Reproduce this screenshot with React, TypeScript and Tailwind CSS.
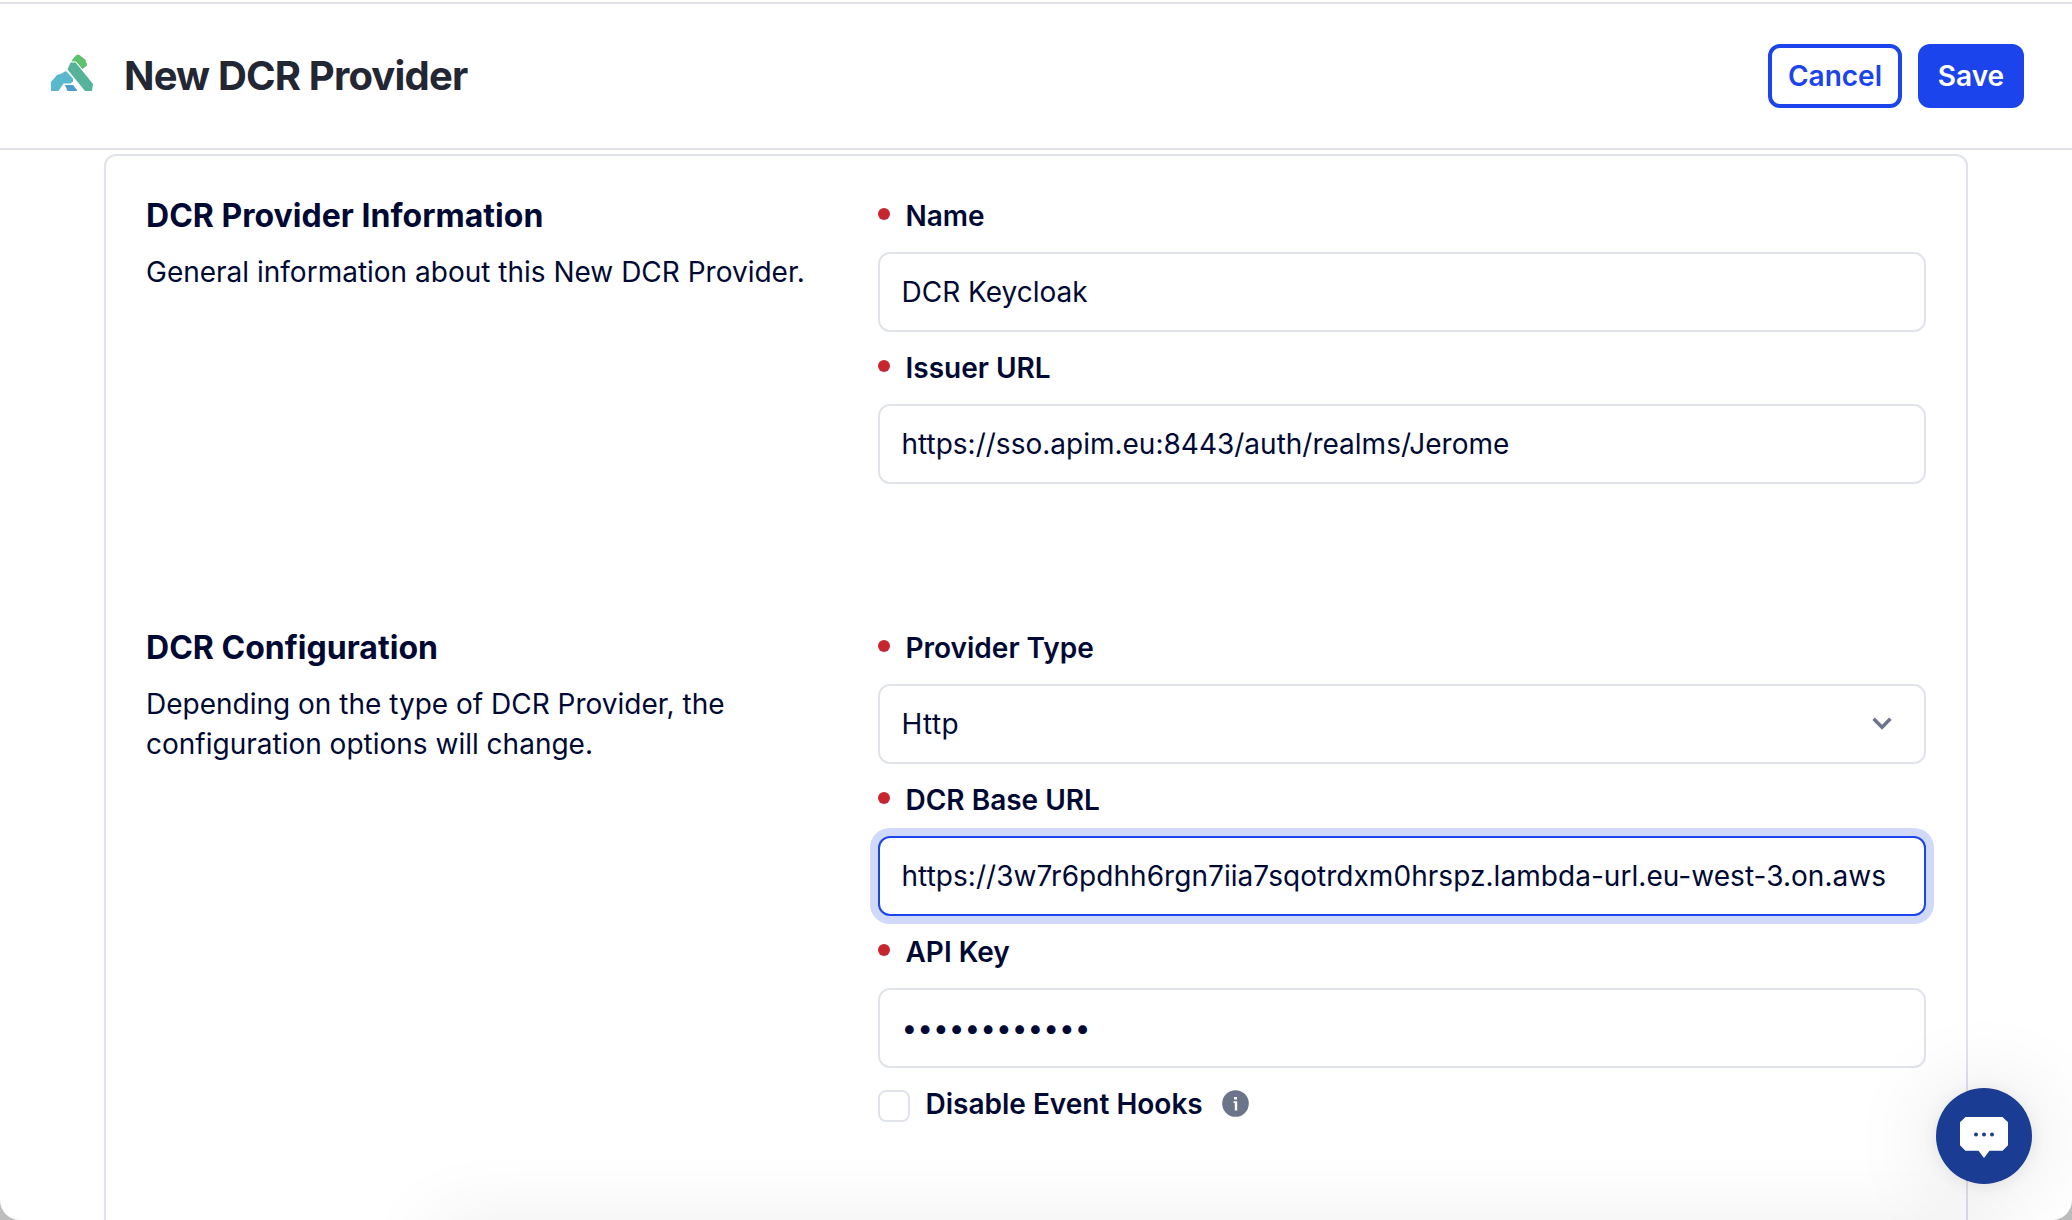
import React from "react";

function KongLogo() {
  return (
    <svg width="42" height="37" viewBox="0 0 42 37" className="-mt-[7px] block">
      <path fill="#5dc16d" d="M26 0.5 L28.5 1 L35 6.2 L34.7 8 L36 9.5 L36 11.5 L31.5 15 L25 7.6 L20.5 7.2 L22 4.8 Z" />
      <path fill="#55b39a" d="M19.5 8.4 L24.6 8.6 L42 30 L41 37 L34 37 L16.5 15.5 Z" />
      <path fill="#57b9cb" d="M15 17 L22 24.5 L22 27.5 L19.5 29.5 L12.5 29.5 L7.5 37 L0 37 L0 28 L6 21 L10.5 19.5 Z" />
      <path fill="#4c9bcd" d="M14 31 L22 31 L26 36 L26 37 L16.5 37 Z" />
    </svg>
  );
}

function Field({
  label,
  className = "border-[#e0e4ea]",
  children,
}: {
  label: string;
  className?: string;
  children: React.ReactNode;
}) {
  return (
    <div>
      <div className="flex h-[56px] items-start gap-[15.5px] leading-10">
        <span className="mt-[12px] size-3 rounded-full bg-[#c6262e]" />
        <span className="font-semibold">{label}</span>
      </div>
      <div className={"flex h-20 items-center justify-between rounded-xl border-2 bg-white pr-[22px] pl-[21.5px] " + className}>
        {children}
      </div>
    </div>
  );
}

function Section({ title, text, children }: { title: string; text: string; children: React.ReactNode }) {
  return (
    <section className="flex">
      <div className="w-[732px] shrink-0">
        <h2 className="text-[32px] leading-10 font-bold tracking-[0.03px]">{title}</h2>
        <p className="mt-4 w-[670px] leading-10">{text}</p>
      </div>
      <div className="flex w-[1048px] flex-col gap-4">{children}</div>
    </section>
  );
}

export default function App() {
  return (
    <div className="relative h-[1220px] w-[2072px] overflow-hidden bg-[#bdbdbd] font-['Inter',sans-serif] text-[28px] text-[#000933]">
      <div className="h-full overflow-hidden rounded-b-[20px] bg-white pt-[2px]">
        <header className="flex h-[148px] items-center justify-between border-y-2 border-[#e0e2e8] pr-12 pl-[51px]">
          <div className="flex items-center">
            <KongLogo />
            <h1 className="ml-[31px] text-[40px] leading-none font-bold tracking-[-0.83px] text-[#232633]">New DCR Provider</h1>
          </div>
          <div className="flex gap-4 font-semibold">
            <button className="h-16 w-[134px] rounded-xl border-4 border-[#1b44ec] text-[#1b44ec]">Cancel</button>
            <button className="h-16 w-[106px] rounded-xl bg-[#1b44ec] text-white">Save</button>
          </div>
        </header>
        <main className="mt-1 ml-[104px] flex h-[1100px] w-[1864px] flex-col gap-[144px] rounded-t-xl border-2 border-[#e0e4ea] px-10 pt-10">
          <Section title="DCR Provider Information" text="General information about this New DCR Provider.">
            <Field label="Name">DCR Keycloak</Field>
            <Field label="Issuer URL">https://sso.apim.eu:8443/auth/realms/Jerome</Field>
          </Section>
          <Section title="DCR Configuration" text="Depending on the type of DCR Provider, the configuration options will change.">
            <Field label="Provider Type">
              <span className="tracking-[0.4px]">Http</span>
              <svg width="20" height="14" viewBox="0 0 20 14" className="mr-[10px]" fill="none" stroke="#6c7489" strokeWidth="3.4">
                <path d="M1.6 1.7 L10 10.3 L18.4 1.7" />
              </svg>
            </Field>
            <Field label="DCR Base URL" className="border-[#1b44ec] tracking-[0.05px] ring-8 ring-[#d0d9fa]">
              https://3w7r6pdhh6rgn7iia7sqotrdxm0hrspz.lambda-url.eu-west-3.on.aws
            </Field>
            <Field label="API Key">
              <span>••••••••••••</span>
            </Field>
            <div className="flex items-start leading-10">
              <span className="mt-[6px] size-8 rounded-lg border-2 border-[#e0e4ea] bg-white" />
              <span className="ml-[15.5px] font-semibold">Disable Event Hooks</span>
              <svg width="27" height="27" viewBox="0 0 27 27" className="mt-[6px] ml-[19px]">
                <circle cx="13.5" cy="13.5" r="13.3" fill="#6c7489" />
                <path fill="#fff" d="M12 7h3v2.4h-3z M11.6 11.2h3.6v9.3h-2.4v-7.4h-1.2z" />
              </svg>
            </div>
          </Section>
        </main>
      </div>
      <div className="absolute top-[1226px] left-[440px] h-20 w-[1540px] shadow-[0_0_80px_6px_rgba(0,0,0,0.07)]" />
      <div className="absolute top-[1088px] left-[1936px] flex size-24 items-center justify-center rounded-full bg-[#1a3c93] shadow-[0_4px_90px_rgba(0,0,0,0.13),0_2px_16px_rgba(0,0,0,0.08)]">
        <svg width="48" height="42" viewBox="0 0 48 42" className="mt-[3px]">
          <path fill="#fff" d="M5.5 0h37L48 5.3v23L42.500 33.800H29.500L24 41L18.500 33.800H5.500L0 28.300V5.300Z" />
          <g fill="#1a3c93">
            <circle cx="16" cy="17.500" r="2" />
            <circle cx="24" cy="17.500" r="2" />
            <circle cx="32" cy="17.500" r="2" />
          </g>
        </svg>
      </div>
    </div>
  );
}
